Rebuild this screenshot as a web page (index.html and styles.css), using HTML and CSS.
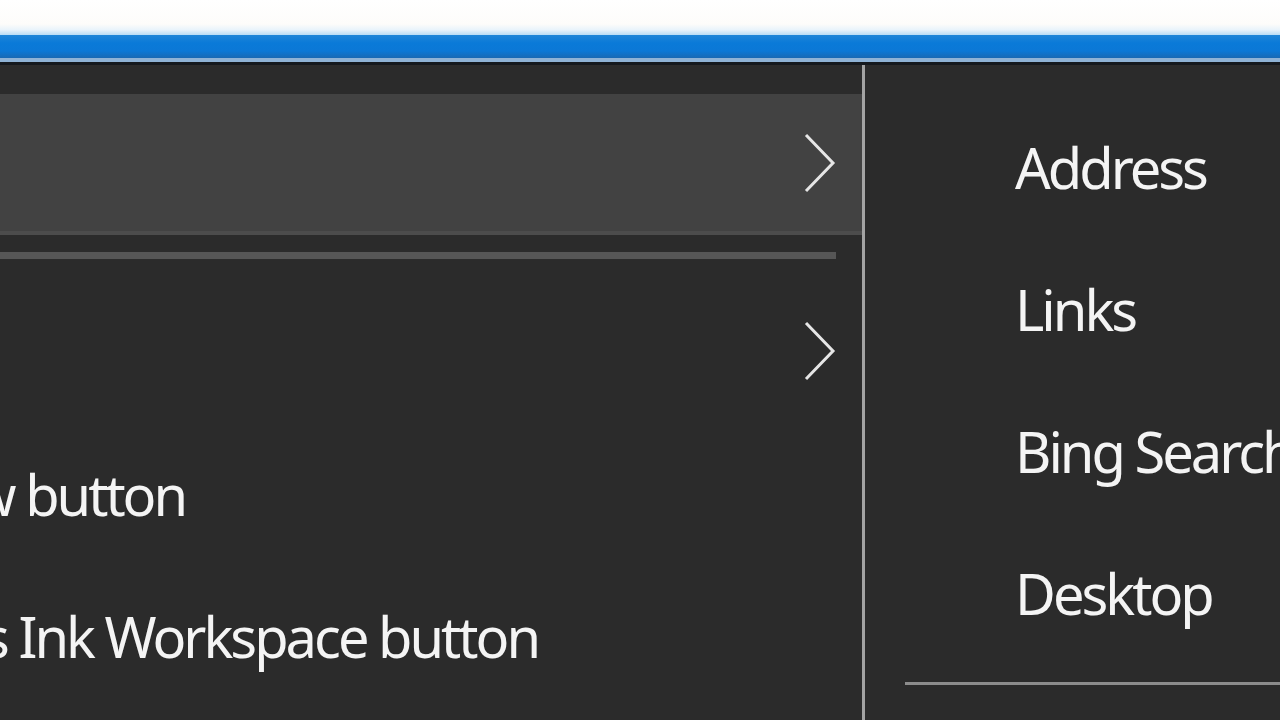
FILE: index.html
```html
<!DOCTYPE html>
<html>
<head>
<meta charset="utf-8">
<link rel="stylesheet" href="styles.css">
</head>
<body>
<div class="page">
  <div class="sky"></div>
  <div class="band"></div>
  <div class="band-edge"></div>
  <div class="menus">
    <div class="menu-left">
      <div class="left-inner">
        <div class="item item-hover">
          <span class="label">Toolbars</span>
          <svg class="chev" viewBox="0 0 32 60" width="32" height="60"><polyline points="2,2 29,30 2,58" fill="none" stroke="#e6e6e6" stroke-width="3"/></svg>
        </div>
        <div class="sep-wrap"><div class="sep"></div></div>
        <div class="item item-tall">
          <span class="label">Search</span>
          <svg class="chev" viewBox="0 0 32 60" width="32" height="60"><polyline points="2,2 29,30 2,58" fill="none" stroke="#e6e6e6" stroke-width="3"/></svg>
        </div>
        <div class="item"><span class="label">Show Task View button</span></div>
        <div class="item"><span class="label">Show Windows Ink Workspace button</span></div>
      </div>
    </div>
    <div class="vdiv"></div>
    <div class="menu-right">
      <div class="ritem"><span class="label">Address</span></div>
      <div class="ritem"><span class="label">Links</span></div>
      <div class="ritem"><span class="label">Bing Search</span></div>
      <div class="ritem"><span class="label">Desktop</span></div>
      <div class="rsep"></div>
    </div>
  </div>
</div>
</body>
</html>
```
FILE: styles.css
```css
html, body {
  margin: 0;
  padding: 0;
  width: 1280px;
  height: 720px;
  overflow: hidden;
  background: #2b2b2b;
}
.page {
  width: 1280px;
  height: 720px;
  display: flex;
  flex-direction: column;
  font-family: "Noto Sans", "Open Sans", sans-serif;
  color: #f4f4f4;
}
.sky {
  height: 35px;
  flex: none;
  background: linear-gradient(to bottom, #ffffff 0px, #fdfcfa 24px, #e8f3fb 30px, #b9dcf5 35px);
}
.band {
  height: 23px;
  flex: none;
  background: linear-gradient(to bottom, #1f86d8 0px, #0a7ad8 8px, #0b78d6 16px, #1869b4 23px);
}
.band-edge {
  height: 4px;
  flex: none;
  background: #8fb3d6;
  border-bottom: 3px solid #15191e;
}
.menus {
  flex: 1;
  display: flex;
  min-height: 0;
}
.menu-left {
  width: 862px;
  flex: none;
  overflow: hidden;
  background: #2b2b2b;
  padding-top: 29px;
  box-sizing: border-box;
}
.left-inner {
  margin-left: -353px;
  display: flex;
  flex-direction: column;
}
.item {
  height: 142px;
  display: flex;
  align-items: center;
  justify-content: space-between;
  padding-right: 26px;
  box-sizing: border-box;
  flex: none;
}
.item-hover {
  height: 141px;
  background: #424242;
  border-bottom: 4px solid #4c4c4c;
}
.item-tall {
  height: 145px;
}
.label {
  font-size: 56px;
  letter-spacing: -3px;
  white-space: nowrap;
  line-height: 1;
}
.chev {
  display: block;
  flex: none;
}
.sep-wrap {
  padding: 17px 26px 19px 0;
}
.sep {
  height: 7px;
  background: #565656;
}
.vdiv {
  width: 3px;
  flex: none;
  background: #a3a3a3;
  margin-right: 1px;
}
.menu-right {
  flex: 1;
  padding-top: 31px;
  padding-left: 149px;
  display: flex;
  flex-direction: column;
  overflow: hidden;
}
.ritem {
  height: 142px;
  flex: none;
  display: flex;
  align-items: center;
}
.rsep {
  margin-top: 18px;
  margin-left: -110px;
  height: 3px;
  background: #8c8c8c;
}
```
